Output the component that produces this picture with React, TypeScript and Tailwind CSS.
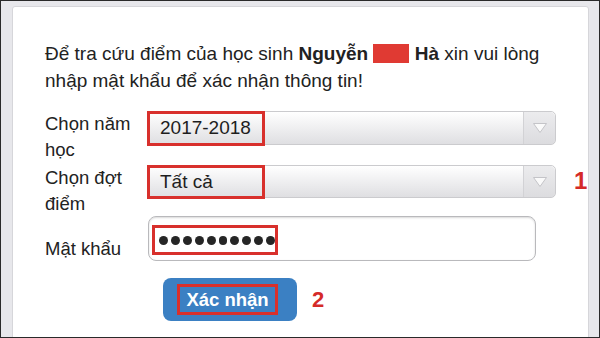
import React from 'react';

const Arrow: React.FC = () => (
  <div className="w-[32px] h-full flex items-center justify-center border-l border-[#d2d2d5] bg-linear-to-b from-[#ececee] to-[#dcdcdf] rounded-r-[5px]">
    <svg width="16" height="12" viewBox="0 0 16 12">
      <polygon points="1.5,1.5 14.5,1.5 8,10.5" fill="#fafafa" stroke="#c4c4c8" strokeWidth="1" />
    </svg>
  </div>
);

const Select: React.FC<{ value: string; height: string }> = ({ value, height }) => (
  <div className={`w-[408px] shrink-0 ${height} flex border border-[#cbcbce] rounded-[5px] bg-linear-to-b from-[#ffffff] to-[#dfdfe2]`}>
    <div className="flex-1 h-full">
      <span className="-ml-[2px] -mt-[1px] flex items-center w-[118px] h-[calc(100%+3px)] border-[3px] border-[#d8302c] pl-[10px] text-[19px] text-[#1e1e1e]">
        {value}
      </span>
    </div>
    <Arrow />
  </div>
);

export default function App() {
  return (
    <div className="w-[600px] h-[338px] overflow-hidden bg-[#e7e7eb] border border-[#2a2a2a] pl-[11px] pr-[10px] pt-[5px] font-['Liberation_Sans',Arial,sans-serif] text-[#222]">
      <div className="h-[340px] bg-white border border-[#d6d6da] rounded-t-[3px] pl-[32px] pr-[30px] pt-[33px]">
        <p className="text-[19px] leading-[27px]">
          Để tra cứu điểm của học sinh <b>Nguyễn</b>{' '}
          <span className="inline-block w-[36px] h-[19px] bg-[#e03a33] align-[-3px]" />{' '}
          <b>Hà</b> xin vui lòng nhập mật khẩu để xác nhận thông tin!
        </p>

        <div className="mt-[17px] flex items-start">
          <div className="w-[103px] shrink-0 text-[18.5px] leading-[26px]">Chọn năm học</div>
          <Select value="2017-2018" height="h-[34px]" />
        </div>

        <div className="mt-[2px] flex items-start">
          <div className="w-[103px] shrink-0 text-[18.5px] leading-[26px]">Chọn đợt điểm</div>
          <Select value="Tất cả" height="h-[33px]" />
          <span className="ml-[18px] mt-[1px] text-[24px] font-bold leading-[30px] text-[#d52a28]">1</span>
        </div>

        <div className="-mt-[1px] flex items-start">
          <div className="w-[103px] shrink-0 pt-[20px] text-[18.5px] leading-[26px]">Mật khẩu</div>
          <div className="w-[388px] shrink-0 h-[45px] border-[1.5px] border-[#b9b9bc] rounded-[8px] bg-white shadow-[inset_0_1px_2px_rgba(0,0,0,0.15)] pl-[3px] pt-[8px]">
            <div className="w-[126px] h-[30px] border-[3px] border-[#d8302c] flex items-center gap-[3px] pl-[4px]">
              {Array.from({ length: 10 }).map((_, i) => (
                <span key={i} className="w-[9px] h-[9px] rounded-full bg-[#262626]" />
              ))}
            </div>
          </div>
        </div>

        <div className="mt-[16px] ml-[118px] flex items-center">
          <button className="h-[43px] rounded-[8px] bg-[#3b80c3] pl-[14px] pr-[19px] flex items-center">
            <span className="w-[101px] h-[31px] border-[3px] border-[#d8302c] flex items-center justify-center text-[18.5px] font-bold text-white">
              Xác nhận
            </span>
          </button>
          <span className="ml-[15px] text-[22px] font-bold text-[#d52a28]">2</span>
        </div>
      </div>
    </div>
  );
}
